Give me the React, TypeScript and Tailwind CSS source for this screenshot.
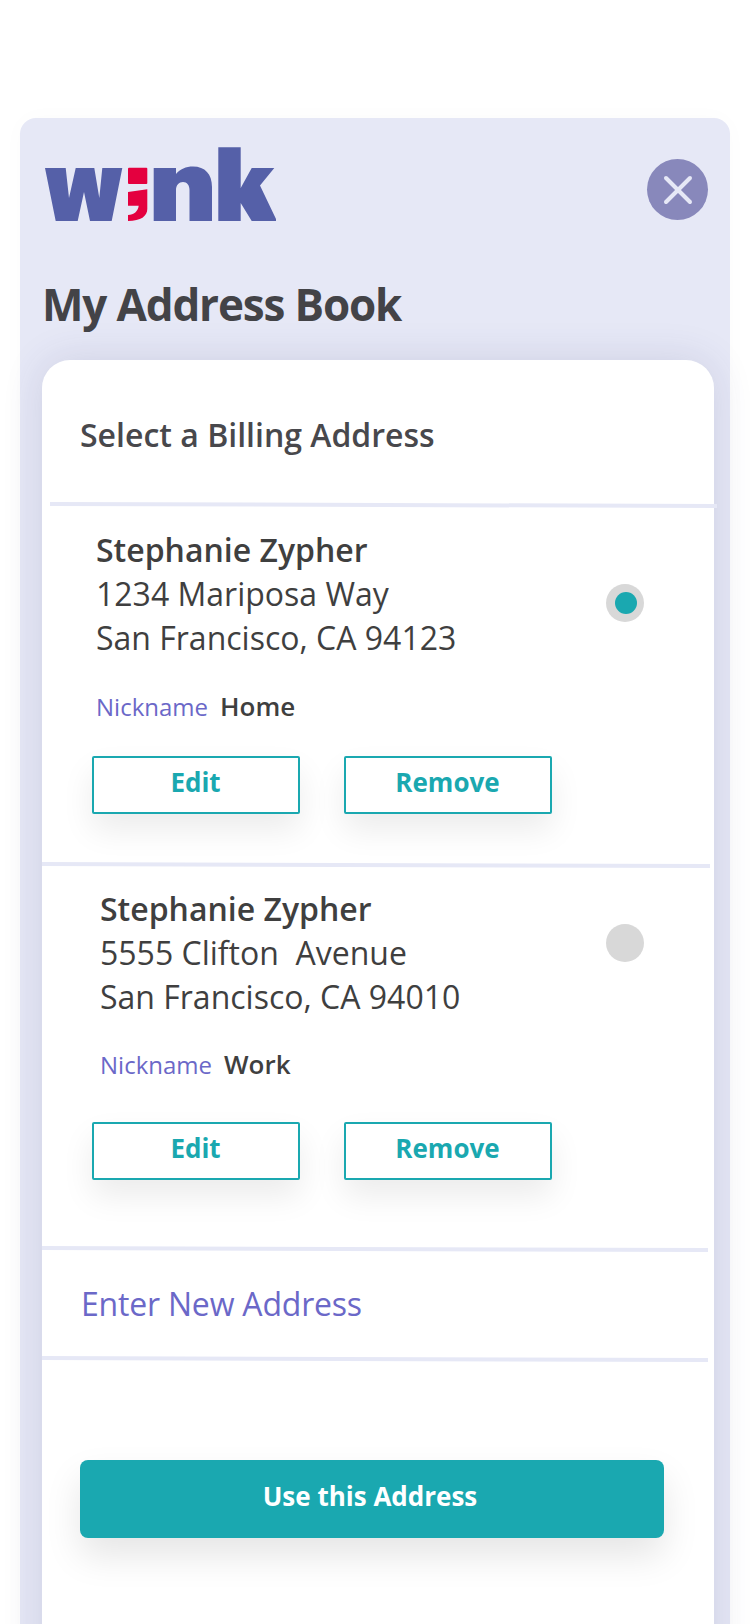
import { X } from "lucide-react";

const font = { fontFamily: '"Open Sans", sans-serif' };

function Logo() {
  return (
    <svg viewBox="45 147 232 75" className="w-[232px] h-[75px] block">
      <g fill="#5560a8">
        <path d="M45 168H65.7L69 198L75.7 168H94.3L99.3 198L102.3 168H122.3L111.7 221H90L84 192L77.7 221H55.7Z" />
        <path d="M153.7 168H176V174C180 169 186 166.5 193 166.5C205 166.5 212 174 212 187V221H189.5V190C189.5 185 187 182 183 182C179 182 176 185 176 190V221H153.7Z" />
        <path d="M218.3 147.3H240.7V188L251.7 168H274.3L260 185.5L276 219V221H251.7L240.7 203V221H218.3Z" />
      </g>
      <g fill="#e4003f">
        <rect x="128" y="167.7" width="19.3" height="16.3" rx="1" />
        <path d="M128 192L147.3 189.3V209C147.3 216 141 221 128 221V215C134 215 138 211 138.7 205.7H128Z" />
      </g>
    </svg>
  );
}

function Divider({ className }: { className: string }) {
  return <div className={`h-[4px] bg-[#e6e8f6] rotate-[0.17deg] ${className}`} />;
}

function OutlineButton({ label }: { label: string }) {
  return (
    <button className="w-[208px] h-[58px] pb-[5px] pr-[1px] border-2 border-[#1aa8b0] rounded-[2px] bg-white text-[#1aa8b0] text-[26px] font-bold shadow-[0_16px_32px_rgba(0,0,0,0.08)]">
      {label}
    </button>
  );
}

type Address = {
  street: string;
  city: string;
  nickname: string;
  selected: boolean;
  top: string;
  textPad: string;
  nickGap: string;
  radioTop: string;
  btnGap: string;
  bottom: string;
};

function AddressRow({ a }: { a: Address }) {
  return (
    <div className={`pl-[50px] pr-[70px] ${a.top} ${a.bottom}`}>
      <div className="flex justify-between items-start">
        <div className={a.textPad}>
          <div className="text-[32px] leading-[44px] font-semibold text-[#3f3f3f]">Stephanie Zypher</div>
          <div className="text-[32px] leading-[44px] text-[#3f3f3f] whitespace-pre">{a.street}</div>
          <div className="text-[32px] leading-[44px] text-[#3f3f3f] whitespace-pre">{a.city}</div>
          <div className={`flex items-baseline gap-[12px] leading-[32px] ${a.nickGap}`}>
            <span className="text-[24px] text-[#6b68c8]">Nickname</span>
            <span className="text-[26px] font-semibold text-[#3f3f3f]">{a.nickname}</span>
          </div>
        </div>
        <div
          className={`w-[38px] h-[38px] rounded-full bg-[#d8d8d8] flex items-center justify-center ${a.radioTop}`}
        >
          {a.selected && <div className="w-[22px] h-[22px] rounded-full bg-[#1aa8b0] ml-[2px]" />}
        </div>
      </div>
      <div className={`flex gap-[44px] ${a.btnGap}`}>
        <OutlineButton label="Edit" />
        <OutlineButton label="Remove" />
      </div>
    </div>
  );
}

const addresses: Address[] = [
  {
    street: "1234 Mariposa Way",
    city: "San Francisco, CA 94123",
    nickname: "Home",
    selected: true,
    top: "pt-[21px]",
    textPad: "pl-[4px]",
    nickGap: "mt-[30px]",
    radioTop: "mt-[56px]",
    btnGap: "mt-[33px]",
    bottom: "pb-[49px]",
  },
  {
    street: "5555 Clifton  Avenue",
    city: "San Francisco, CA 94010",
    nickname: "Work",
    selected: false,
    top: "pt-[20px]",
    textPad: "pl-[8px]",
    nickGap: "mt-[29px]",
    radioTop: "mt-[37px]",
    btnGap: "mt-[41px]",
    bottom: "pb-[67px]",
  },
];

export default function App() {
  return (
    <div style={font} className="h-[1624px] overflow-hidden bg-white pt-[118px] px-[20px]">
      <div className="h-[1600px] rounded-[16px] bg-[#e6e8f6] pt-[29px] shadow-[0_0_24px_rgba(0,0,0,0.02)]">
        <div className="flex justify-between items-start pl-[25px] pr-[22px]">
          <Logo />
          <div className="mt-[12px] w-[61px] h-[61px] rounded-full bg-[#8888bb] flex items-center justify-center">
            <X size={48} strokeWidth={2} className="text-[#e6e8f6]" />
          </div>
        </div>
        <h1 className="mt-[52px] pl-[22px] text-[44px] leading-[60px] font-bold tracking-[-1.15px] text-[#434347]">
          My Address Book
        </h1>
        <div className="mt-[26px] ml-[22px] w-[672px] h-[1400px] rounded-t-[28px] bg-white shadow-[0_0_40px_rgba(60,60,110,0.14)]">
          <div className="h-[143px] pl-[38px] pt-[7px] flex items-center">
            <h2 className="text-[32px] font-semibold text-[#48484c]">Select a Billing Address</h2>
          </div>
          <Divider className="ml-[8px] mr-[-3px]" />
          <AddressRow a={addresses[0]} />
          <Divider className="mr-[4px]" />
          <AddressRow a={addresses[1]} />
          <Divider className="mr-[6px]" />
          <div className="h-[106px] pl-[39px] flex items-center">
            <span className="text-[32px] tracking-[-0.2px] text-[#6b68c8]">Enter New Address</span>
          </div>
          <Divider className="mr-[6px]" />
          <div className="mt-[99px] pl-[38px]">
            <button className="w-[584px] h-[78px] pb-[6px] pr-[4px] rounded-[8px] bg-[#1aa8b0] text-white text-[26px] font-bold shadow-[0_18px_36px_rgba(0,0,0,0.1)]">
              Use this Address
            </button>
          </div>
        </div>
      </div>
    </div>
  );
}
